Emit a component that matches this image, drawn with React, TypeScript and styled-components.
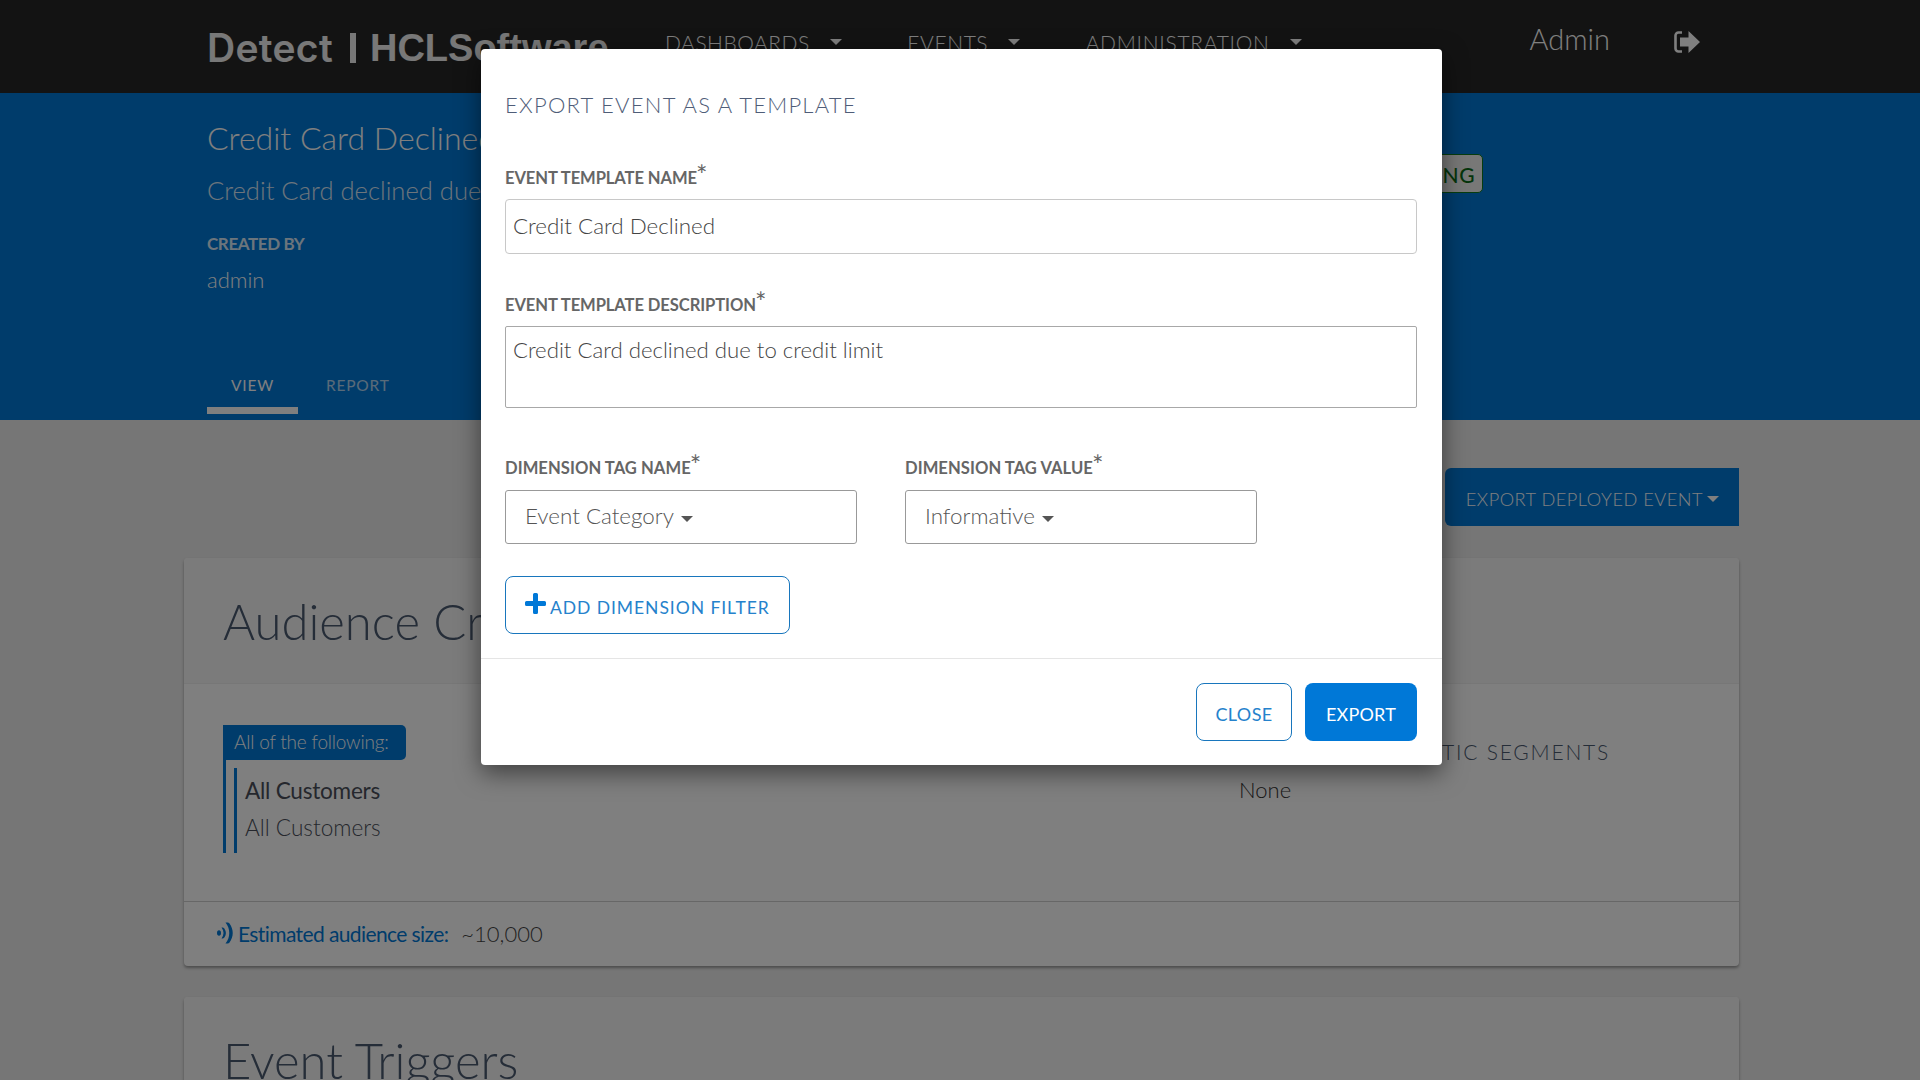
import React from "react";
import styled, { createGlobalStyle } from "styled-components";

const Global = createGlobalStyle`
  html, body { margin: 0; padding: 0; height: 1080px; overflow: hidden; background: #ececec; }
  * { box-sizing: border-box; }
  body { font-family: Lato, "Open Sans", sans-serif; color: #4a4a4a; }
`;

const Page = styled.div`
  width: 1920px;
  height: 1080px;
  overflow: hidden;
  position: relative;
  background: #ececec;
`;

const TopBar = styled.header`
  height: 93px;
  background: #262626;
  display: flex;
  align-items: flex-start;
  padding-left: 207px;
`;

const Logo = styled.div`
  width: 458px;
  height: 95px;
  display: flex;
  align-items: center;
  color: #f0f0f0;
  font-family: Inter, "Liberation Sans", sans-serif;
  font-weight: 600;
  font-size: 39px;
  line-height: 1;
  white-space: nowrap;
  flex: none;
`;

const LogoWord = styled.span`
  letter-spacing: 0.3px;
`;

const LogoBar = styled.span`
  display: block;
  width: 6px;
  height: 30px;
  background: #f0f0f0;
  margin: 0 14px 0 17px;
`;

const LogoBrand = styled.span`
  font-family: "Liberation Sans", Arial, sans-serif;
  font-size: 38px;
  font-weight: 700;
`;

const NavList = styled.nav`
  display: flex;
  align-items: center;
  height: 84px;
  gap: 65.5px;
`;

const NavItem = styled.div<{ $tracking: number }>`
  display: flex;
  align-items: center;
  gap: 20px;
  font-size: 21px;
  font-weight: 300;
  letter-spacing: ${(p) => p.$tracking}px;
  color: #fff;
`;

const Caret = styled.span<{ $size?: number; $color?: string }>`
  display: inline-block;
  width: 0;
  height: 0;
  border-left: ${(p) => p.$size ?? 6}px solid transparent;
  border-right: ${(p) => p.$size ?? 6}px solid transparent;
  border-top: ${(p) => p.$size ?? 6}px solid ${(p) => p.$color ?? "currentColor"};
  flex: none;
`;

const UserArea = styled.div`
  margin-left: auto;
  display: flex;
  align-items: center;
  height: 84px;
  gap: 63px;
  padding-right: 220px;
  color: #fff;
`;

const UserName = styled.span`
  font-size: 29px;
  font-weight: 300;
  margin-bottom: 7px;
`;

const Hero = styled.section`
  height: 327px;
  background: #0078d7;
  color: #fff;
  padding: 27px 0 0 207px;
  position: relative;
`;

const HeroTitle = styled.h1`
  margin: 0;
  font-size: 32px;
  line-height: 36px;
  font-weight: 300;
`;

const HeroSubtitle = styled.p`
  margin: 18px 0 0;
  font-size: 25.6px;
  line-height: 32px;
  font-weight: 300;
  opacity: 0.85;
`;

const MetaLabel = styled.div`
  margin-top: 27px;
  font-size: 17px;
  line-height: 22px;
  font-weight: 700;
  letter-spacing: -0.4px;
  opacity: 0.85;
`;

const MetaValue = styled.div`
  margin-top: 12px;
  font-size: 22px;
  line-height: 26px;
  font-weight: 300;
`;

const Tabs = styled.div`
  display: flex;
  margin-top: 81px;
`;

const Tab = styled.div<{ $active?: boolean }>`
  width: ${(p) => (p.$active ? 91 : 118)}px;
  height: 40px;
  padding-left: ${(p) => (p.$active ? 24 : 28)}px;
  font-size: 15.5px;
  line-height: 22px;
  letter-spacing: 0.8px;
  opacity: ${(p) => (p.$active ? 1 : 0.7)};
  border-bottom: ${(p) => (p.$active ? "7px solid #fff" : "none")};
`;

const StatusBadge = styled.div`
  position: absolute;
  left: 1360px;
  top: 61px;
  width: 123px;
  height: 39px;
  border: 1px solid #0e7a1e;
  border-radius: 5px;
  background: #f0f0ee;
  color: #0b6a16;
  font-size: 21px;
  line-height: 39px;
  font-weight: 500;
  letter-spacing: 0.5px;
  text-align: right;
  padding-right: 7px;
`;

const Content = styled.main`
  padding: 0 181px 0 184px;
`;

const ActionRow = styled.div`
  display: flex;
  justify-content: flex-end;
  padding-top: 48px;
  height: 138px;
`;

const ExportMenuButton = styled.button`
  width: 294px;
  height: 58px;
  border: 0;
  border-radius: 6px 0 0 6px;
  background: #0078d7;
  color: #fff;
  font-family: Lato, sans-serif;
  font-size: 18.2px;
  font-weight: 300;
  letter-spacing: 0.5px;
  display: flex;
  align-items: center;
  justify-content: flex-end;
  gap: 4px;
  padding: 3px 20px 0 0;
`;

const Card = styled.section`
  background: #fff;
  border-radius: 4px;
  box-shadow: 0 2px 3px rgba(0, 0, 0, 0.35);
  margin-bottom: 31px;
`;

const CardHeader = styled.div`
  height: 126px;
  background: #f6f6f6;
  border-radius: 4px 4px 0 0;
  border-bottom: 1px solid #eee;
  padding: 34px 0 0 39px;
`;

const CardTitle = styled.h2`
  margin: 0;
  font-size: 49px;
  line-height: 58px;
  font-weight: 300;
  color: #4b5a70;
`;

const CardBody = styled.div`
  height: 218px;
  display: flex;
  justify-content: space-between;
  padding: 41px 129px 0 39px;
  border-bottom: 1px solid #cfcfcf;
`;

const Group = styled.div`
  display: flex;
  flex-direction: column;
  width: 183px;
`;

const GroupTag = styled.div`
  width: 183px;
  height: 35px;
  background: #0078d7;
  color: #fff;
  border-radius: 0 5px 5px 0;
  padding-left: 11px;
  font-size: 19px;
  line-height: 34px;
  font-weight: 300;
  letter-spacing: -0.2px;
`;

const GroupRail = styled.div`
  border-left: 3px solid #0078d7;
  padding: 8px 0 0 8px;
  height: 93px;
`;

const GroupInner = styled.div`
  border-left: 3px solid #0078d7;
  padding: 4px 0 0 8px;
  height: 85px;
`;

const GroupLine = styled.div<{ $strong?: boolean }>`
  font-size: 22.6px;
  line-height: 37px;
  white-space: nowrap;
  font-weight: ${(p) => (p.$strong ? 400 : 300)};
  letter-spacing: ${(p) => (p.$strong ? "-0.25px" : "0")};
  color: #4a4f5a;
`;

const SegmentColumn = styled.div`
  width: 371px;
  padding-top: 13px;
`;

const SegmentHeading = styled.div`
  font-size: 21px;
  line-height: 28px;
  font-weight: 300;
  letter-spacing: 1.8px;
  text-align: right;
  color: #4b5a70;
`;

const SegmentValue = styled.div`
  font-size: 22px;
  line-height: 30px;
  font-weight: 300;
  margin-top: 9px;
  color: #333;
`;

const CardFooter = styled.div`
  height: 64px;
  display: flex;
  align-items: center;
  padding: 0 0 2px 33px;
  font-size: 21px;
`;

const AudienceIcon = styled.svg`
  width: 16px;
  height: 22px;
  margin-right: 5px;
  color: #0078d7;
  flex: none;
`;

const AudienceLabel = styled.span`
  color: #0078d7;
  font-weight: 400;
  letter-spacing: -0.6px;
  margin-right: 13px;
`;

const AudienceValue = styled.span`
  font-size: 22px;
  font-weight: 300;
  color: #444;
`;

const Overlay = styled.div`
  position: absolute;
  inset: 0;
  background: rgba(0, 0, 0, 0.5);
  z-index: 10;
`;

const Modal = styled.div`
  position: absolute;
  left: 481px;
  top: 49px;
  width: 961px;
  height: 716px;
  background: #fff;
  border-radius: 4px;
  box-shadow: 0 8px 24px rgba(0, 0, 0, 0.5);
  z-index: 20;
  display: flex;
  flex-direction: column;
`;

const ModalBody = styled.div`
  padding: 41px 25px 0 24px;
  height: 610px;
  border-bottom: 1px solid #e5e5e5;
`;

const ModalTitle = styled.h3`
  margin: 0;
  font-size: 22px;
  line-height: 30px;
  font-weight: 300;
  letter-spacing: 1.25px;
  color: #4f5d78;
`;

const FieldLabel = styled.label<{ $tracking?: number }>`
  display: block;
  font-size: 16.6px;
  line-height: 22px;
  font-weight: 700;
  color: #666;
  letter-spacing: ${(p) => p.$tracking ?? -0.1}px;
  white-space: nowrap;
  margin-bottom: 11px;
  padding-top: 1px;
`;

const Asterisk = styled.span`
  font-size: 27px;
  line-height: 0;
  font-weight: 400;
  position: relative;
  top: 1px;
  margin-left: -1px;
`;

const TextField = styled.div`
  height: 55px;
  margin-top: -1px;
  border: 1px solid #c8c8c8;
  border-radius: 4px;
  padding-left: 7px;
  font-size: 22.4px;
  line-height: 51px;
  font-weight: 300;
  color: #444;
`;

const TextAreaField = styled.div`
  height: 82px;
  margin-top: -1px;
  border: 1px solid #a8a8a8;
  border-radius: 2px;
  padding: 8px 0 0 7px;
  font-size: 22.2px;
  line-height: 30px;
  font-weight: 300;
  color: #444;
`;

const FirstField = styled.div`
  margin-top: 46px;
`;

const SecondField = styled.div`
  margin-top: 39px;
`;

const TagRow = styled.div`
  display: flex;
  gap: 48px;
  margin-top: 48px;
`;

const TagField = styled.div`
  width: 352px;
`;

const SelectBox = styled.div`
  height: 54px;
  border: 1px solid #999;
  border-radius: 3px;
  display: flex;
  align-items: center;
  gap: 7px;
  padding: 0 0 3px 19px;
  font-size: 22.4px;
  font-weight: 300;
  color: #555;

  ${Caret} {
    margin-top: 7px;
  }
`;

const AddButton = styled.button`
  display: flex;
  align-items: center;
  width: 285px;
  height: 58px;
  margin-top: 32px;
  padding: 4px 0 0 19px;
  border: 1px solid #1876bd;
  border-radius: 8px;
  background: #fff;
  color: #2582cc;
  font-family: Lato, sans-serif;
  font-size: 17.5px;
  font-weight: 400;
  letter-spacing: 0.95px;
  white-space: nowrap;
`;

const PlusIcon = styled.svg`
  width: 21px;
  height: 21px;
  margin: -7px 4px 0 0;
  color: #0078d7;
  flex: none;
`;

const ModalFooter = styled.div`
  display: flex;
  justify-content: flex-end;
  gap: 13px;
  padding: 24px 25px 0 0;
`;

const OutlineButton = styled.button`
  width: 96px;
  height: 58px;
  border: 1px solid #1876bd;
  border-radius: 8px;
  background: #fff;
  color: #2582cc;
  font-family: Lato, sans-serif;
  font-size: 18px;
  letter-spacing: 0.4px;
  padding: 4px 0 0;
`;

const PrimaryButton = styled.button`
  width: 112px;
  height: 58px;
  border: 0;
  border-radius: 8px;
  background: #0078d7;
  color: #fff;
  font-family: Lato, sans-serif;
  font-size: 18px;
  letter-spacing: 0.2px;
  padding: 4px 0 0;
`;

const LogoutIcon = () => (
  <svg width="27" height="26" viewBox="0 0 27 26" aria-hidden="true">
    <path d="M9 3.500H5.500a3 3 0 0 0-3 3v13a3 3 0 0 0 3 3H9" fill="none" stroke="currentColor" strokeWidth="2.600" />
    <path d="M7 8.500h8.500V2L27 13 15.500 24v-6.500H7z" fill="currentColor" />
  </svg>
);

export default function App() {
  return (
    <Page>
      <Global />
      <TopBar>
        <Logo>
          <LogoWord>Detect</LogoWord>
          <LogoBar />
          <LogoBrand>HCLSoftware</LogoBrand>
        </Logo>
        <NavList>
          <NavItem $tracking={0.5}>DASHBOARDS <Caret /></NavItem>
          <NavItem $tracking={0.6}>EVENTS <Caret /></NavItem>
          <NavItem $tracking={0.7}>ADMINISTRATION <Caret /></NavItem>
        </NavList>
        <UserArea>
          <UserName>Admin</UserName>
          <LogoutIcon />
        </UserArea>
      </TopBar>
      <Hero>
        <HeroTitle>Credit Card Declined</HeroTitle>
        <HeroSubtitle>Credit Card declined due to credit limit</HeroSubtitle>
        <MetaLabel>CREATED BY</MetaLabel>
        <MetaValue>admin</MetaValue>
        <Tabs>
          <Tab $active>VIEW</Tab>
          <Tab>REPORT</Tab>
        </Tabs>
        <StatusBadge>RUNNING</StatusBadge>
      </Hero>
      <Content>
        <ActionRow>
          <ExportMenuButton>EXPORT DEPLOYED EVENT <Caret $size={6} /></ExportMenuButton>
        </ActionRow>
        <Card>
          <CardHeader>
            <CardTitle>Audience Criteria</CardTitle>
          </CardHeader>
          <CardBody>
            <Group>
              <GroupTag>All of the following:</GroupTag>
              <GroupRail>
                <GroupInner>
                  <GroupLine $strong>All Customers</GroupLine>
                  <GroupLine>All Customers</GroupLine>
                </GroupInner>
              </GroupRail>
            </Group>
            <SegmentColumn>
              <SegmentHeading>AUTOMATIC SEGMENTS</SegmentHeading>
              <SegmentValue>None</SegmentValue>
            </SegmentColumn>
          </CardBody>
          <CardFooter>
            <AudienceIcon viewBox="0 0 16 22" aria-hidden="true">
              <ellipse cx="2" cy="11" rx="2" ry="2.800" fill="currentColor" />
              <path d="M4.500 5.500c2.700 3.700 2.700 7.300 0 11 1.700 0 2.500-.3 3-1.200 1.900-2.900 1.900-5.700 0-8.600-.5-.9-1.300-1.200-3-1.200z" fill="currentColor" />
              <path d="M8.500 .5c5 6.500 5 14.500 0 21 2.300.3 3.300 0 4-1 4.300-6 4.300-13 0-19-.7-1-1.700-1.300-4-1z" fill="currentColor" />
            </AudienceIcon>
            <AudienceLabel>Estimated audience size:</AudienceLabel>
            <AudienceValue>~10,000</AudienceValue>
          </CardFooter>
        </Card>
        <Card>
          <CardHeader>
            <CardTitle>Event Triggers</CardTitle>
          </CardHeader>
        </Card>
      </Content>
      <Overlay />
      <Modal role="dialog" aria-label="Export event as a template">
        <ModalBody>
          <ModalTitle>EXPORT EVENT AS A TEMPLATE</ModalTitle>
          <FirstField>
            <FieldLabel>EVENT TEMPLATE NAME<Asterisk>*</Asterisk></FieldLabel>
            <TextField>Credit Card Declined</TextField>
          </FirstField>
          <SecondField>
            <FieldLabel>EVENT TEMPLATE DESCRIPTION<Asterisk>*</Asterisk></FieldLabel>
            <TextAreaField>Credit Card declined due to credit limit</TextAreaField>
          </SecondField>
          <TagRow>
            <TagField>
              <FieldLabel $tracking={0.05}>DIMENSION TAG NAME<Asterisk>*</Asterisk></FieldLabel>
              <SelectBox>Event Category <Caret $size={6} $color="#555" /></SelectBox>
            </TagField>
            <TagField>
              <FieldLabel $tracking={0.05}>DIMENSION TAG VALUE<Asterisk>*</Asterisk></FieldLabel>
              <SelectBox>Informative <Caret $size={6} $color="#555" /></SelectBox>
            </TagField>
          </TagRow>
          <AddButton>
            <PlusIcon viewBox="0 0 21 21" aria-hidden="true">
              <path d="M8 1.500A1.500 1.500 0 0 1 9.500 0h2A1.500 1.500 0 0 1 13 1.500V8h6.500A1.500 1.500 0 0 1 21 9.500v2a1.500 1.500 0 0 1-1.500 1.500H13v6.500a1.500 1.500 0 0 1-1.500 1.500h-2A1.500 1.500 0 0 1 8 19.500V13H1.500A1.500 1.500 0 0 1 0 11.500v-2A1.500 1.500 0 0 1 1.500 8H8z" fill="currentColor" />
            </PlusIcon>
            ADD DIMENSION FILTER
          </AddButton>
        </ModalBody>
        <ModalFooter>
          <OutlineButton>CLOSE</OutlineButton>
          <PrimaryButton>EXPORT</PrimaryButton>
        </ModalFooter>
      </Modal>
    </Page>
  );
}
